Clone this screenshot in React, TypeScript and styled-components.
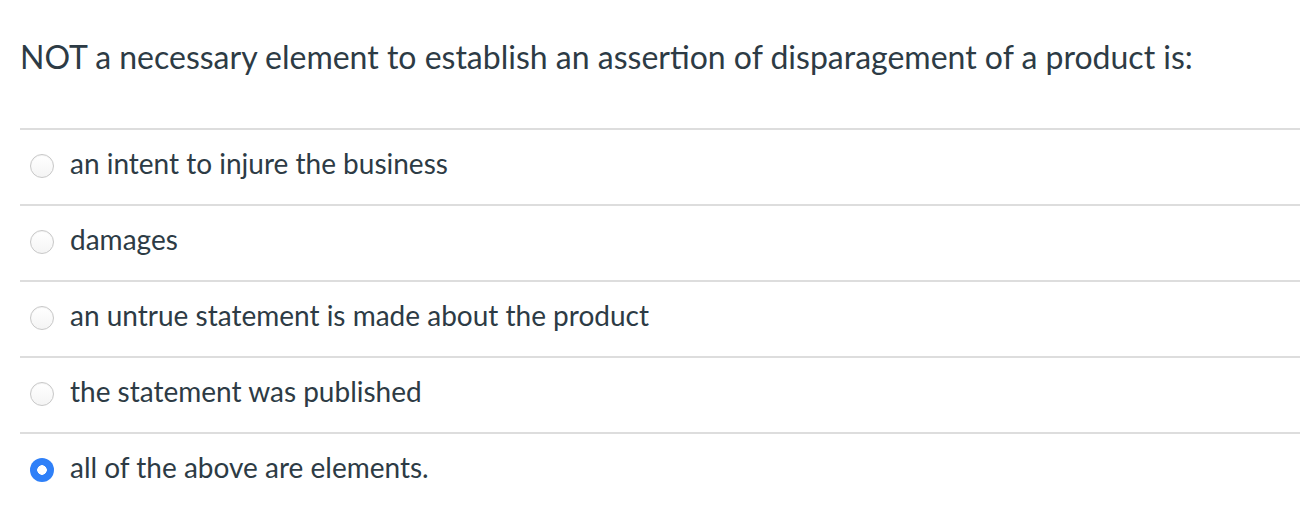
import styled, { createGlobalStyle } from "styled-components";

const GlobalStyle = createGlobalStyle`
  body {
    margin: 0;
    background: #ffffff;
    font-family: Lato, "Noto Sans", sans-serif;
    color: #2d3b45;
  }
`;

const Question = styled.div`
  padding: 0 0 0 20px;
`;

const Prompt = styled.div`
  font-size: 32px;
  line-height: 40px;
  padding: 37px 0 51px;
`;

const Answers = styled.div`
  display: flex;
  flex-direction: column;
`;

const Answer = styled.label`
  box-sizing: border-box;
  display: flex;
  align-items: flex-start;
  gap: 16px;
  height: 76px;
  border-top: 2px solid #dddddd;
  padding: 15px 0 0 10px;
  font-size: 28px;
  line-height: 36px;
`;

const Radio = styled.span<{ $checked?: boolean }>`
  box-sizing: border-box;
  width: 24px;
  height: 24px;
  margin-top: 9px;
  border-radius: 50%;
  flex-shrink: 0;
  ${(p) =>
    p.$checked
      ? `
    background: radial-gradient(circle, #ffffff 0 4.5px, #2f80f8 5px);
  `
      : `
    border: 1px solid #c8c8c8;
    background: linear-gradient(#ffffff, #f4f4f4);
    box-shadow: inset 0 1px 1px rgba(0, 0, 0, 0.05);
  `}
`;

const answers = [
  "an intent to injure the business",
  "damages",
  "an untrue statement is made about the product",
  "the statement was published",
  "all of the above are elements.",
];

export default function App() {
  return (
    <>
      <GlobalStyle />
      <Question>
        <Prompt>
          NOT a necessary element to establish an assertion of disparagement of a product is:
        </Prompt>
        <Answers>
          {answers.map((a, i) => (
            <Answer key={a}>
              <Radio $checked={i === answers.length - 1} />
              {a}
            </Answer>
          ))}
        </Answers>
      </Question>
    </>
  );
}
